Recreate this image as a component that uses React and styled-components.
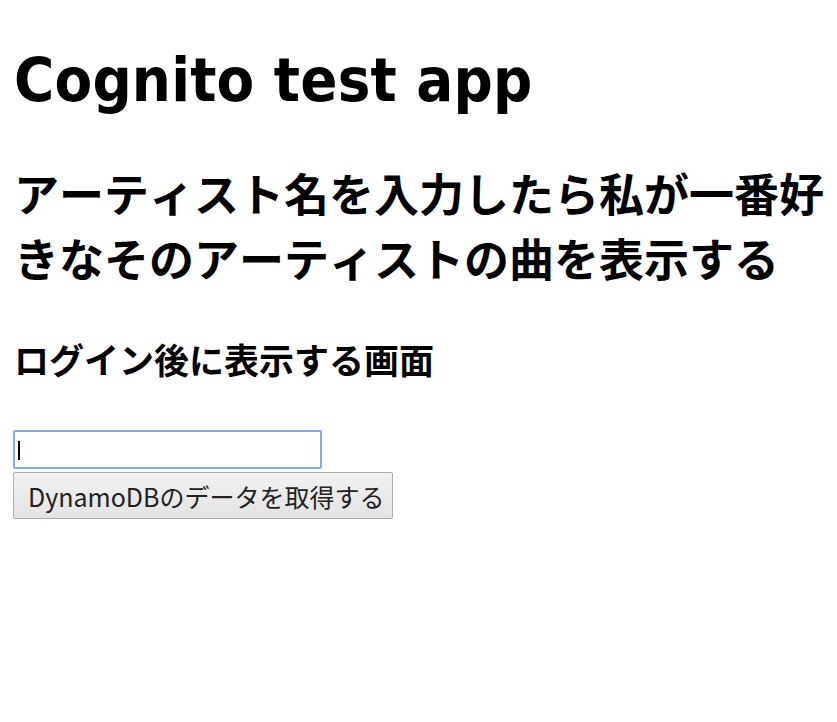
import React from 'react';
import styled, { createGlobalStyle } from 'styled-components';

const GlobalStyle = createGlobalStyle`
  body {
    margin: 0;
    background: #fff;
    color: #000;
    font-family: "DejaVu Sans", "Noto Sans CJK JP", sans-serif;
    font-kerning: none;
  }
`;

const Page = styled.div`
  padding: 0 4px 0 14px;
`;

const Title = styled.h1`
  margin: 0;
  padding-top: 44px;
  font-family: "DejaVu Sans Condensed", "DejaVu Sans", sans-serif;
  font-size: 61px;
  line-height: 72px;
  font-weight: bold;
  letter-spacing: 0.2px;
`;

const Lead = styled.h2`
  margin: 44px 0 0;
  font-size: 45px;
  line-height: 65px;
  font-weight: bold;
  font-family: "Noto Sans CJK JP", sans-serif;
`;

const Sub = styled.h3`
  margin: 44px 0 0;
  font-size: 35px;
  line-height: 50px;
  font-weight: bold;
  font-family: "Noto Sans CJK JP", sans-serif;
`;

const Form = styled.div`
  display: flex;
  flex-direction: column;
  align-items: flex-start;
  gap: 3px;
  margin: 46px 0 0 -1px;
`;

const Field = styled.span`
  position: relative;
  display: block;

  &::after {
    content: "";
    position: absolute;
    left: 5px;
    top: 11px;
    width: 2px;
    height: 19px;
    background: #000;
  }
`;

const Input = styled.input`
  box-sizing: border-box;
  display: block;
  width: 309px;
  height: 39px;
  margin: 0;
  padding: 0 5px;
  border: 2px solid #84a9ee;
  border-radius: 2px;
  outline: none;
  font-size: 23px;
  caret-color: transparent;
  background: #fff;
`;

const Button = styled.button`
  box-sizing: border-box;
  height: 47px;
  width: 380px;
  margin: 0;
  padding: 0 0 0 14px;
  border: 1px solid #acacac;
  border-radius: 2px;
  background: linear-gradient(#f2f2f2, #e3e3e3);
  color: #222;
  font-size: 25px;
  font-family: "Noto Sans CJK JP", sans-serif;
  font-kerning: none;
  white-space: nowrap;
  text-align: left;
`;

export default function App() {
  return (
    <>
      <GlobalStyle />
      <Page>
        <Title>Cognito test app</Title>
        <Lead>アーティスト名を入力したら私が一番好きなそのアーティストの曲を表示する</Lead>
        <Sub>ログイン後に表示する画面</Sub>
        <Form>
          <Field>
            <Input type="text" />
          </Field>
          <Button>DynamoDBのデータを取得する</Button>
        </Form>
      </Page>
    </>
  );
}
